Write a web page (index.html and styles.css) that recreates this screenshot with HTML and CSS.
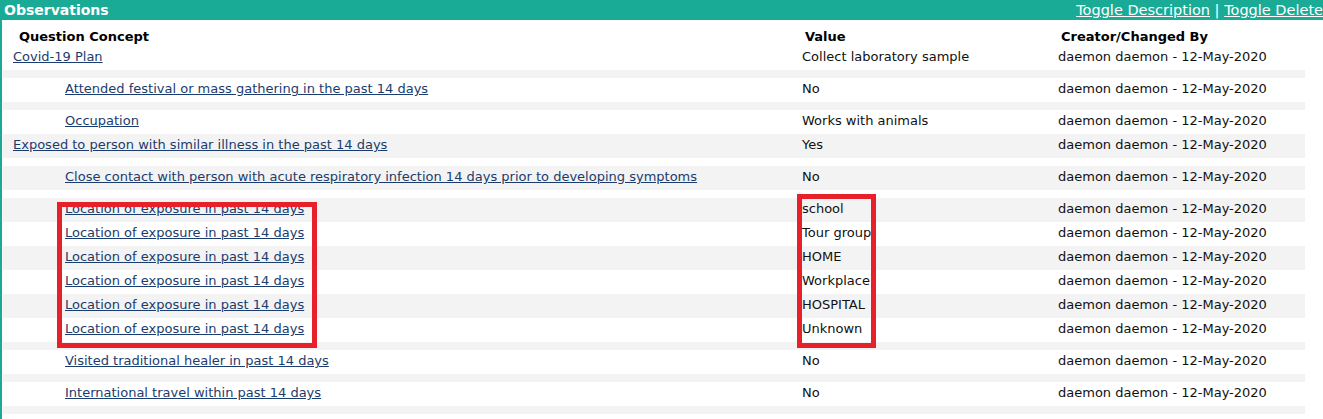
FILE: index.html
```html
<!DOCTYPE html>
<html lang="en">
<head>
  <meta charset="UTF-8">
  <title>Observations</title>
  <link rel="stylesheet" href="styles.css">
</head>
<body>

<div class="box">
  <!-- Box header -->
  <div class="box-header">
    <span class="box-title">Observations</span>
    <span class="toggles">
      <a href="#">Toggle Description</a> | <a href="#">Toggle Delete</a>
    </span>
  </div>

  <div class="obs-wrap">
    <table class="obs-table">
      <colgroup>
        <col class="col-concept">
        <col class="col-value">
        <col class="col-creator">
      </colgroup>
      <thead>
        <tr>
          <th class="th-concept">Question Concept</th>
          <th>Value</th>
          <th>Creator/Changed By</th>
        </tr>
      </thead>
      <tbody>
        <tr class="odd">
          <td class="concept"><a href="#">Covid-19 Plan</a></td>
          <td>Collect laboratory sample</td>
          <td>daemon daemon - 12-May-2020</td>
        </tr>
        <tr class="even spacer"><td colspan="3"></td></tr>
        <tr class="odd">
          <td class="concept nested"><a href="#">Attended festival or mass gathering in the past 14 days</a></td>
          <td>No</td>
          <td>daemon daemon - 12-May-2020</td>
        </tr>
        <tr class="even spacer"><td colspan="3"></td></tr>
        <tr class="odd">
          <td class="concept nested"><a href="#">Occupation</a></td>
          <td>Works with animals</td>
          <td>daemon daemon - 12-May-2020</td>
        </tr>
        <tr class="even">
          <td class="concept"><a href="#">Exposed to person with similar illness in the past 14 days</a></td>
          <td>Yes</td>
          <td>daemon daemon - 12-May-2020</td>
        </tr>
        <tr class="odd spacer"><td colspan="3"></td></tr>
        <tr class="even">
          <td class="concept nested"><a href="#">Close contact with person with acute respiratory infection 14 days prior to developing symptoms</a></td>
          <td>No</td>
          <td>daemon daemon - 12-May-2020</td>
        </tr>
        <tr class="odd spacer"><td colspan="3"></td></tr>
        <tr class="even">
          <td class="concept nested"><a href="#">Location of exposure in past 14 days</a></td>
          <td>school</td>
          <td>daemon daemon - 12-May-2020</td>
        </tr>
        <tr class="odd">
          <td class="concept nested"><a href="#">Location of exposure in past 14 days</a></td>
          <td>Tour group</td>
          <td>daemon daemon - 12-May-2020</td>
        </tr>
        <tr class="even">
          <td class="concept nested"><a href="#">Location of exposure in past 14 days</a></td>
          <td>HOME</td>
          <td>daemon daemon - 12-May-2020</td>
        </tr>
        <tr class="odd">
          <td class="concept nested"><a href="#">Location of exposure in past 14 days</a></td>
          <td>Workplace</td>
          <td>daemon daemon - 12-May-2020</td>
        </tr>
        <tr class="even">
          <td class="concept nested"><a href="#">Location of exposure in past 14 days</a></td>
          <td>HOSPITAL</td>
          <td>daemon daemon - 12-May-2020</td>
        </tr>
        <tr class="odd">
          <td class="concept nested"><a href="#">Location of exposure in past 14 days</a></td>
          <td>Unknown</td>
          <td>daemon daemon - 12-May-2020</td>
        </tr>
        <tr class="even spacer"><td colspan="3"></td></tr>
        <tr class="odd">
          <td class="concept nested"><a href="#">Visited traditional healer in past 14 days</a></td>
          <td>No</td>
          <td>daemon daemon - 12-May-2020</td>
        </tr>
        <tr class="even spacer"><td colspan="3"></td></tr>
        <tr class="odd">
          <td class="concept nested"><a href="#">International travel within past 14 days</a></td>
          <td>No</td>
          <td>daemon daemon - 12-May-2020</td>
        </tr>
        <tr class="even spacer"><td colspan="3"></td></tr>
      </tbody>
    </table>

    <!-- highlight annotations -->
    <div class="mark mark-concept"></div>
    <div class="mark mark-value"></div>
  </div>
</div>

</body>
</html>
```

FILE: styles.css
```css
/* Global */
* {
  box-sizing: border-box;
}
body {
  margin: 0;
  font-family: "DejaVu Sans", Verdana, sans-serif;
  font-size: 13px;
  color: #111;
  background-color: #fff;
  overflow: hidden;
}
a {
  color: #1a3c6e;
}

/* Box */
.box {
  border-left: 2px solid #1aab97;
  min-height: 419px;
}
.box-header {
  display: flex;
  justify-content: space-between;
  align-items: center;
  height: 20px;
  margin-left: -2px;
  padding-left: 4px;
  background-color: #1aab97;
  color: #fff;
  font-size: 14px;
  white-space: nowrap;
}
.box-title {
  font-weight: bold;
}
.toggles {
  font-size: 14.5px;
}
.toggles a {
  color: #fff;
}

/* Observation table */
.obs-wrap {
  position: relative;
  padding: 2px 16px 0 1px;
}
.obs-table {
  width: 1302px;
  border-collapse: collapse;
}
.col-concept {
  width: 797px;
}
.col-value {
  width: 256px;
}
th {
  text-align: left;
  vertical-align: bottom;
  height: 24px;
  padding: 0 0 2px 5px;
  font-weight: bold;
  color: #000;
}
th.th-concept {
  padding-left: 16px;
}
td {
  height: 24px;
  padding: 0 0 3px 2px;
  white-space: nowrap;
}
td.concept {
  padding-left: 10px;
}
td.nested {
  padding-left: 62px;
}
tr.even {
  background-color: #f3f3f3;
}
tr.odd {
  background-color: #fff;
}
tr.spacer td {
  height: 8px;
  padding: 0;
}

/* Red highlight boxes */
.mark {
  position: absolute;
  border: 5px solid #e8202a;
}
.mark-concept {
  left: 55px;
  top: 182px;
  width: 260px;
  height: 146px;
}
.mark-value {
  left: 795px;
  top: 174px;
  width: 79px;
  height: 154px;
}
```
